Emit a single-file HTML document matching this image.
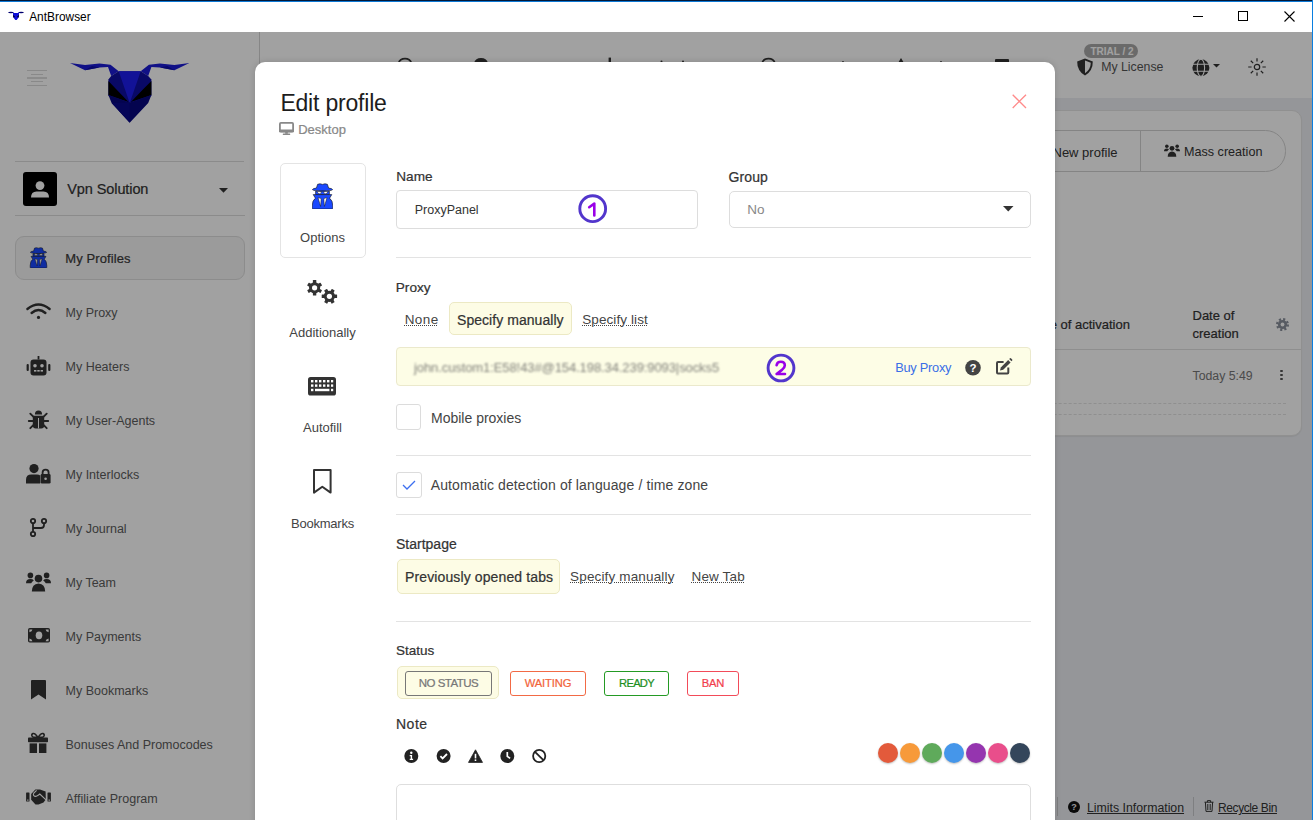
<!DOCTYPE html>
<html><head><meta charset="utf-8">
<style>
*{box-sizing:border-box;margin:0;padding:0}
html,body{width:1313px;height:820px;overflow:hidden;background:#fff;font-family:"Liberation Sans",sans-serif;color:#333}
.a{position:absolute}
.t{position:absolute;line-height:1;white-space:nowrap}
.b{font-weight:700}
.sb{font-weight:400;-webkit-text-stroke:0.22px currentColor}
svg{position:absolute;overflow:visible}
.sep{position:absolute;height:1px;background:#e3e3e3}
.si{left:65.5px;font-size:12.5px;color:#5c5c5c}
.dot{text-decoration:underline dotted;text-underline-offset:1px;text-decoration-thickness:1px}
</style></head><body>
<svg width="0" height="0" style="position:absolute">
 <defs>
  <symbol id="spy" viewBox="0 0 21 26">
   <path d="M5.6 1.3 Q8 0.2 10.5 1.4 Q13 0.2 15.4 1.3 L16.6 5 Q20.6 5.6 20.6 6.6 Q20.2 8 10.5 8 Q0.8 8 0.4 6.6 Q0.4 5.6 4.4 5 Z" fill="#1a48ff" stroke="#111" stroke-width="0.6"/>
   <path d="M3.6 8.2 H17.4 V11.6 H3.6Z" fill="#1a48ff" stroke="#111" stroke-width="0.6"/>
   <path d="M5.2 8.6 Q7.5 8.2 9.6 8.9 Q9.2 10.8 7.2 10.8 Q5.6 10.6 5.2 8.6Z M11.4 8.9 Q13.5 8.2 15.8 8.6 Q15.4 10.6 13.8 10.8 Q11.8 10.8 11.4 8.9Z" fill="#fff" stroke="#222" stroke-width="0.5"/>
   <path d="M1.2 11.6 H19.8 L17.6 15.2 Q20.8 17.4 20.8 23 V25.2 Q20.8 26 20 26 H1 Q0.2 26 0.2 25.2 V23 Q0.2 17.4 3.4 15.2Z" fill="#1a48ff" stroke="#111" stroke-width="0.6"/>
   <path d="M6 14.6 L9.2 15.6 L8.6 23.4Z M15 14.6 L11.8 15.6 L12.4 23.4Z" fill="#fff" stroke="#111" stroke-width="0.5"/>
  </symbol>
  <symbol id="users" viewBox="0 0 25 20">
   <circle cx="12.5" cy="6.6" r="3.8"/>
   <path d="M5.8 19.6 Q5.8 12 12.5 11.4 Q19.2 12 19.2 19.6Z"/>
   <circle cx="4.4" cy="3.4" r="2.8"/><circle cx="20.6" cy="3.4" r="2.8"/>
   <path d="M0 11.2 Q0 7 4.4 7 Q6.8 7 7.8 8.4 Q6 9.6 5.2 11.2Z M25 11.2 Q25 7 20.6 7 Q18.2 7 17.2 8.4 Q19 9.6 19.8 11.2Z"/>
  </symbol>
 </defs>
</svg>

<!-- ===== Title bar ===== -->
<div class="a" style="left:0;top:0;width:1313px;height:1px;background:#021838"></div><div class="a" style="left:0;top:1px;width:1313px;height:1px;background:#0b78d4"></div>
<div class="a" style="left:1312px;top:0;width:1px;height:820px;background:#0a7fe0"></div>
<svg style="left:8px;top:11px" width="16" height="10" viewBox="0 0 16 10">
 <ellipse cx="2.9" cy="1.5" rx="2.8" ry="0.75" fill="#000070"/><ellipse cx="13.1" cy="1.5" rx="2.8" ry="0.75" fill="#000070"/>
 <path d="M4.8 1.2 L6 2 H10 L11.2 1.2 L11 2.5 L10.9 6 L8.7 8.9 H7.3 L5.1 6 L5 2.5Z" fill="#1010d8"/>
 <path d="M5.1 3.8 L7 6 L5.4 6.4Z M10.9 3.8 L9 6 L10.6 6.4Z" fill="#000"/>
</svg>
<div class="t" id="title" style="left:29.2px;top:12.4px;font-size:11.9px;color:#000">AntBrowser</div>
<div class="a" style="left:1193px;top:16px;width:10px;height:1px;background:#000"></div>
<div class="a" style="left:1238px;top:11px;width:10px;height:10px;border:1px solid #000"></div>
<svg style="left:1284px;top:11px" width="11" height="11" viewBox="0 0 11 11"><path d="M0.5 0.5L10.5 10.5M10.5 0.5L0.5 10.5" stroke="#000" stroke-width="1.1"/></svg>

<!-- ===== App (under overlay) ===== -->
<div class="a" style="left:0;top:32px;width:1312px;height:788px;background:#eceef2"></div>
<!-- header -->
<div class="a" style="left:260px;top:32px;width:1052px;height:66px;background:#fff"></div>
<!-- card -->
<div class="a" style="left:600px;top:110px;width:702px;height:325.5px;background:#fff;border-radius:10px;border:1px solid #e4e4e4;box-shadow:0 1px 1px rgba(0,0,0,0.06)"></div>
<!-- sidebar -->
<div class="a" style="left:0;top:32px;width:260px;height:788px;background:#fff;border-right:1px solid #d4d4d4"></div>

<!-- hamburger -->
<div class="a" style="left:27px;top:70px;width:20px;height:1px;background:#d9d9d9"></div>
<div class="a" style="left:31px;top:74px;width:12px;height:1px;background:#d9d9d9"></div>
<div class="a" style="left:27px;top:77.4px;width:20px;height:1.2px;background:#dcdcdc"></div>
<div class="a" style="left:31px;top:81px;width:12px;height:1px;background:#d9d9d9"></div>
<div class="a" style="left:27px;top:85px;width:20px;height:1px;background:#d9d9d9"></div>

<!-- logo -->
<svg style="left:0;top:0" width="260" height="130" viewBox="0 0 260 130">
 <path d="M70 63 L85 70.3 L99.5 67.5 L108 67 L111.2 76 L118.7 71.2 L110.5 64.8 L99.5 63.5 L85 65Z" fill="#1c1cd6"/>
 <path d="M85 70.3 L92 66 L99.5 67.5Z" fill="#0d0da8"/>
 <path d="M189.4 63 L174.4 70.3 L159.9 67.5 L151.4 67 L148.2 76 L140.7 71.2 L148.9 64.8 L159.9 63.5 L174.4 65Z" fill="#1c1cd6"/>
 <path d="M174.4 70.3 L167.4 66 L159.9 67.5Z" fill="#0d0da8"/>
 <path d="M108.4 79.5 L111.2 76 L118.7 71.2 L140.7 71.2 L148.2 76 L151.4 79.5 L151.4 96 L129.7 103 L108.4 96Z" fill="#0f0fa2"/>
 <path d="M118.7 71.2 L140.7 71.2 L129.7 103Z" fill="#1e1ef0"/>
 <path d="M108.4 81 L116 89 L128.5 102 L108.4 95Z M151.4 81 L143.4 89 L130.9 102 L151.4 95Z" fill="#000"/>
 <path d="M108.4 95 L129.7 102.6 L151.4 95 L148.2 103 L129.7 122.7 L111.6 103Z" fill="#07077e"/>
 <path d="M111.6 103 L129.7 102.6 L129.7 122.7Z" fill="#08088c"/>
</svg>

<div class="sep" style="left:15px;top:161px;width:229px;background:#dcdcdc"></div>
<div class="a" style="left:23px;top:172px;width:34px;height:34px;background:#000;border-radius:3px"></div>
<svg style="left:23px;top:172px" width="34" height="34" viewBox="0 0 34 34"><circle cx="17" cy="13.6" r="4.4" fill="#fff"/><path d="M8 25.5 Q8 19.5 13.5 19.5 H20.5 Q26 19.5 26 25.5Z" fill="#fff"/></svg>
<div class="t sb" style="left:67.3px;top:182px;font-size:14.5px;letter-spacing:-0.1px;color:#333">Vpn Solution</div>
<svg style="left:219px;top:187.5px" width="9" height="5" viewBox="0 0 9 5"><path d="M0 0H9L4.5 4.8Z" fill="#333"/></svg>
<div class="sep" style="left:15px;top:215px;width:230px;background:#dcdcdc"></div>

<!-- My Profiles active -->
<div class="a" style="left:15px;top:236px;width:230px;height:44px;background:#f5f5f5;border:1px solid #dedede;border-radius:9px"></div>
<svg style="left:29.3px;top:247px" width="19" height="21"><use href="#spy" width="19" height="21"/></svg>
<div class="t sb" style="left:65.3px;top:251.6px;font-size:13px;letter-spacing:0.1px;color:#3a3a3a">My Profiles</div>

<div class="t si" style="top:307.3px">My Proxy</div>
<div class="t si" style="top:361.3px">My Heaters</div>
<div class="t si" style="top:415.3px">My User-Agents</div>
<div class="t si" style="top:469.3px">My Interlocks</div>
<div class="t si" style="top:523.3px">My Journal</div>
<div class="t si" style="top:577.2px">My Team</div>
<div class="t si" style="top:631.3px">My Payments</div>
<div class="t si" style="top:685.3px">My Bookmarks</div>
<div class="t si" style="top:739.3px">Bonuses And Promocodes</div>
<div class="t si" style="top:793.3px">Affiliate Program</div>

<!-- sidebar icons -->
<svg style="left:26px;top:302.8px" width="25" height="17" viewBox="0 0 25 17" fill="none" stroke="#333" stroke-width="2.4" stroke-linecap="round">
 <path d="M1.4 6 Q12.5 -3 23.6 6"/><path d="M5.6 10 Q12.5 4 19.4 10"/><circle cx="12.5" cy="14.4" r="1.6" fill="#333" stroke="none"/>
</svg>
<svg style="left:26px;top:355.5px" width="25" height="20" viewBox="0 0 25 20">
 <rect x="11.6" y="0" width="1.8" height="3.5" fill="#333"/>
 <rect x="4.5" y="3.4" width="16" height="16" rx="3" fill="#333"/>
 <rect x="0.6" y="8" width="2.2" height="7" rx="1" fill="#333"/><rect x="22.2" y="8" width="2.2" height="7" rx="1" fill="#333"/>
 <circle cx="9" cy="9.8" r="1.8" fill="#fff"/><circle cx="16" cy="9.8" r="1.8" fill="#fff"/>
 <rect x="8" y="14" width="2.4" height="1.6" fill="#fff"/><rect x="11.3" y="14" width="2.4" height="1.6" fill="#fff"/><rect x="14.6" y="14" width="2.4" height="1.6" fill="#fff"/>
</svg>
<svg style="left:28.7px;top:409.8px" width="20" height="20" viewBox="0 0 20 20">
 <path d="M5.9 4.6 Q5.9 0.4 9.5 0.4 Q13.1 0.4 13.1 4.6Z" fill="#333"/>
 <path d="M3.8 5.8 H15.2 V15.4 Q15.2 18.4 12.2 18.4 H6.8 Q3.8 18.4 3.8 15.4Z" fill="#333"/>
 <path d="M9.5 8 V18.4" stroke="#fff" stroke-width="1"/>
 <path d="M1.3 3.7 L4.8 7.2 M-0.2 11 H3.8 M1.3 18.2 L4.8 14.7 M17.7 3.7 L14.2 7.2 M19.2 11 H15.2 M17.7 18.2 L14.2 14.7" stroke="#333" stroke-width="1.9" stroke-linecap="round"/>
</svg>
<svg style="left:26.3px;top:463.8px" width="25" height="20" viewBox="0 0 25 20" fill="#333">
 <circle cx="8" cy="4.6" r="4.6"/>
 <path d="M0 19.6 V16 Q0 10.6 5.4 10.6 H11 Q13 10.6 14.2 11.6 V19.6Z"/>
 <path d="M16.6 10.6 V8.4 Q16.6 5.6 19.6 5.6 Q22.6 5.6 22.6 8.4 V10.6" fill="none" stroke="#333" stroke-width="1.8"/>
 <rect x="14.6" y="10" width="10" height="9.6" rx="1.4"/>
 <circle cx="19.6" cy="14.8" r="1.3" fill="#fff"/>
</svg>
<svg style="left:30px;top:518px" width="17" height="19" viewBox="0 0 17 19" fill="none" stroke="#333" stroke-width="1.8">
 <circle cx="3" cy="3" r="2.2"/><circle cx="3" cy="16" r="2.2"/><circle cx="14" cy="3" r="2.2"/>
 <path d="M3 5.2 V13.8 M14 5.2 V7 Q14 10 11 10 H3"/>
</svg>
<svg style="left:26px;top:571.7px" width="25" height="20" fill="#333"><use href="#users" width="25" height="20"/></svg>
<svg style="left:27.6px;top:628px" width="22" height="15" viewBox="0 0 22 15">
 <rect x="0" y="0" width="22" height="14.6" rx="1.8" fill="#333"/>
 <path d="M1.4 1.4 H4.4 Q4.2 3.6 1.4 4.2Z M20.6 1.4 H17.6 Q17.8 3.6 20.6 4.2Z M1.4 13.2 H4.4 Q4.2 11 1.4 10.4Z M20.6 13.2 H17.6 Q17.8 11 20.6 10.4Z" fill="#fff"/>
 <ellipse cx="11" cy="7.3" rx="3.3" ry="3.9" fill="#fff"/>
</svg>
<svg style="left:31.1px;top:679.6px" width="15" height="20" viewBox="0 0 15 20"><path d="M0 1 Q0 0 1 0 H14 Q15 0 15 1 V19.5 L7.5 14.6 L0 19.5Z" fill="#333"/></svg>
<svg style="left:28.4px;top:733.3px" width="20" height="20" viewBox="0 0 20 20" fill="#333">
 <path d="M10 4.4 Q7 0 5 0.6 Q3.4 1.2 4 3 Q4.6 4.4 7 4.4Z M10 4.4 Q13 0 15 0.6 Q16.6 1.2 16 3 Q15.4 4.4 13 4.4Z" fill="none" stroke="#333" stroke-width="1.6"/>
 <rect x="0" y="4.6" width="20" height="4.6" rx="0.8"/>
 <rect x="1.6" y="10.4" width="7.4" height="9.6"/><rect x="11" y="10.4" width="7.4" height="9.6"/>
</svg>
<svg style="left:26px;top:789.4px" width="25" height="16" viewBox="0 0 25 16" fill="#333">
 <rect x="0.1" y="3.5" width="3.4" height="9" rx="0.5"/><rect x="21.5" y="3.5" width="3.4" height="9" rx="0.5"/>
 <rect x="1" y="10.6" width="1.6" height="1" fill="#fff"/><rect x="22.4" y="10.6" width="1.6" height="1" fill="#fff"/>
 <path d="M5.2 5 L9.3 0.6 H14 L19.6 2.4 L19.8 10.5 L17.5 13.5 L12.5 15.6 H9.5 L5.2 10.8Z"/>
 <path d="M10.6 1.4 L7.8 4.2 Q6.6 6.2 8.6 7.2 Q10.4 7.8 12.2 6.2 L13.8 5 L20 10.8" fill="none" stroke="#fff" stroke-width="1.1"/>
</svg>

<!-- header icons peeking above modal -->
<svg style="left:0;top:0" width="1060" height="64" viewBox="0 0 1060 64" fill="none" stroke="#333" stroke-width="1.6">
 <path d="M398.5 63 Q400 58.6 405 58.6 Q410 58.6 411.5 63"/>
 <path d="M474 63 Q475.5 58 481 58 Q486.5 58 488 63Z" fill="#333" stroke="none"/>
 <rect x="608.6" y="57.6" width="2.4" height="5" fill="#333" stroke="none"/>
 <circle cx="661.5" cy="61.6" r="1" fill="#333" stroke="none"/><circle cx="683" cy="61.6" r="1" fill="#333" stroke="none"/>
 <path d="M762 63 Q763.5 58.6 768.5 58.6 Q773.5 58.6 775 63"/>
 <circle cx="843" cy="61.8" r="0.9" fill="#333" stroke="none"/><circle cx="941" cy="61.8" r="0.9" fill="#333" stroke="none"/>
 <path d="M898 63 L901 58 L904 63Z" fill="#333" stroke="none"/>
 <rect x="995" y="59" width="14" height="4" rx="1" fill="#333" stroke="none"/>
</svg>
<!-- header right -->
<div class="a" style="left:1084px;top:44px;width:54px;height:14px;border-radius:7px;background:#a9a9a9"></div>
<div class="t b" style="left:1090.5px;top:47px;font-size:10px;letter-spacing:0px;color:#fff">TRIAL / 2</div>
<svg style="left:1075.6px;top:58px" width="18" height="18" viewBox="0 0 18 18">
 <path d="M9 0.4 L16.8 3.4 Q17 12.6 9 17.6 Q1 12.6 1.2 3.4Z" fill="#333"/>
 <path d="M9 2.6 L14.8 4.8 Q14.6 11.6 9 15.2Z" fill="#fff"/>
</svg>
<div class="t" style="left:1101.2px;top:61.4px;font-size:12.3px;color:#555">My License</div>
<svg style="left:1191.5px;top:58.5px" width="18" height="18" viewBox="0 0 18 18">
 <circle cx="8.9" cy="8.7" r="8.5" fill="#333"/>
 <path d="M0 5.2 H18 M0 12.2 H18" stroke="#fff" stroke-width="1.1"/>
 <ellipse cx="8.9" cy="8.7" rx="3.7" ry="8.6" fill="none" stroke="#fff" stroke-width="1.1"/>
</svg>
<svg style="left:1213px;top:63.6px" width="7" height="4" viewBox="0 0 7 4"><path d="M0 0H7L3.5 3.6Z" fill="#333"/></svg>
<svg style="left:1247.6px;top:58.2px" width="18" height="18" viewBox="0 0 18 18" fill="none" stroke="#333" stroke-width="1.2">
 <circle cx="9" cy="9" r="2.7"/>
 <path d="M14.40 9.00 L17.80 9.00 M12.82 12.82 L15.22 15.22 M9.00 14.40 L9.00 17.80 M5.18 12.82 L2.78 15.22 M3.60 9.00 L0.20 9.00 M5.18 5.18 L2.78 2.78 M9.00 3.60 L9.00 0.20 M12.82 5.18 L15.22 2.78"/>
</svg>

<!-- card content -->
<div class="a" style="left:900px;top:130px;width:386px;height:41.5px;border:1px solid #d2d2d2;border-radius:0 20.5px 20.5px 0"></div>
<div class="a" style="left:1140px;top:130px;width:1px;height:41px;background:#d2d2d2"></div>
<div class="t" style="left:1052.5px;top:146px;font-size:13px;color:#333">New profile</div>
<svg style="left:1164px;top:144px" width="16" height="13" fill="#333"><use href="#users" width="16" height="13"/></svg>
<div class="t" style="left:1184px;top:146px;font-size:12.6px;color:#333">Mass creation</div>

<div class="t sb" style="left:1029.5px;top:318px;font-size:13px;color:#333">Date of activation</div>
<div class="t sb" style="left:1192.5px;top:309px;font-size:13px;color:#333">Date of</div>
<div class="t sb" style="left:1192.5px;top:326.7px;font-size:13px;color:#333">creation</div>
<svg style="left:1275.5px;top:317.6px" width="13" height="13" viewBox="0 0 13 13">
 <circle cx="6.5" cy="6.5" r="4.6" fill="#8a909c"/>
 <circle cx="6.5" cy="6.5" r="5.3" fill="none" stroke="#8a909c" stroke-width="2.4" stroke-dasharray="2.1 2.06"/>
 <circle cx="6.5" cy="6.5" r="1.9" fill="#fff"/>
</svg>
<div class="a" style="left:600px;top:349px;width:701px;height:1px;background:#e1e1e1"></div>
<div class="t" style="left:1192.5px;top:370.4px;font-size:12.3px;color:#777">Today 5:49</div>
<div class="a" style="left:1280.2px;top:369.6px;width:2.4px;height:2.4px;border-radius:50%;background:#555"></div>
<div class="a" style="left:1280.2px;top:373.8px;width:2.4px;height:2.4px;border-radius:50%;background:#555"></div>
<div class="a" style="left:1280.2px;top:378px;width:2.4px;height:2.4px;border-radius:50%;background:#555"></div>
<div class="a" style="left:600px;top:403px;width:686px;height:0;border-top:1px dashed #e2e2e2"></div>
<div class="a" style="left:600px;top:414px;width:686px;height:0;border-top:1px dashed #e2e2e2"></div>

<!-- footer -->
<div class="a" style="left:1057px;top:797px;width:1px;height:19px;background:#c8c9cc"></div>
<div class="a" style="left:1193px;top:797px;width:1px;height:19px;background:#c8c9cc"></div>
<svg style="left:1068.4px;top:800.6px" width="12" height="12" viewBox="0 0 12 12"><circle cx="6" cy="6" r="6" fill="#111"/><text x="6" y="9.4" font-size="9" font-weight="700" text-anchor="middle" fill="#eceef2" font-family="Liberation Sans">?</text></svg>
<div class="t" style="left:1087px;top:801.5px;font-size:12.3px;color:#333;text-decoration:underline">Limits Information</div>
<svg style="left:1204.3px;top:800px" width="10" height="12" viewBox="0 0 10 12" fill="none" stroke="#333" stroke-width="1">
 <path d="M0.5 2.2 H9.5 M3.4 2.2 V0.6 H6.6 V2.2 M1.4 2.2 L2 11.4 H8 L8.6 2.2 M3.8 4 V10 M6.2 4 V10"/>
</svg>
<div class="t" style="left:1218px;top:802px;font-size:12px;letter-spacing:-0.4px;color:#333;text-decoration:underline">Recycle Bin</div>

<!-- overlay -->
<div class="a" style="left:0;top:32px;width:1312px;height:788px;background:rgba(0,0,0,0.369)"></div>

<!-- ===== Modal ===== -->
<div id="modal" class="a" style="left:255px;top:62px;width:800px;height:800px;background:#fff;border-radius:10px;box-shadow:0 0 6px rgba(0,0,0,0.15)"></div>

<!-- close -->
<svg style="left:1012px;top:93.9px" width="15" height="15" viewBox="0 0 15 15"><path d="M0.7 0.7L14 14M14 0.7L0.7 14" stroke="#ff8a8a" stroke-width="1.3"/></svg>
<div class="t" id="h_edit" style="left:280.4px;top:92.4px;font-size:23px;letter-spacing:-0.2px;color:#1d1d1d">Edit profile</div>
<svg style="left:279px;top:122px" width="15" height="13" viewBox="0 0 15 13">
 <rect x="0.9" y="0.9" width="13.2" height="8.6" rx="1" fill="none" stroke="#888" stroke-width="1.8"/>
 <rect x="0" y="7.6" width="15" height="2.6" rx="0.6" fill="#888"/>
 <rect x="6.2" y="10" width="2.6" height="1.8" fill="#888"/><rect x="3.8" y="11.4" width="7.4" height="1.6" rx="0.5" fill="#888"/>
</svg>
<div class="t sb" id="h_desk" style="left:298.2px;top:122.6px;font-size:13px;color:#888">Desktop</div>

<!-- left tabs -->
<div class="a" style="left:279.5px;top:163.3px;width:86px;height:95px;border:1px solid #e4e4e4;border-radius:5px"></div>
<svg style="left:312px;top:182.7px" width="21" height="26"><use href="#spy" width="21" height="26"/></svg>
<div class="t" style="left:280px;width:85px;text-align:center;top:231.2px;font-size:13px;color:#444">Options</div>
<svg style="left:300px;top:272px" width="45" height="38" viewBox="0 0 45 38"><g transform="translate(14.6,15.8)" fill="#333"><rect x="-1.7" y="-7.7" width="3.4" height="4" rx="0.5" transform="rotate(0)"/><rect x="-1.7" y="-7.7" width="3.4" height="4" rx="0.5" transform="rotate(60)"/><rect x="-1.7" y="-7.7" width="3.4" height="4" rx="0.5" transform="rotate(120)"/><rect x="-1.7" y="-7.7" width="3.4" height="4" rx="0.5" transform="rotate(180)"/><rect x="-1.7" y="-7.7" width="3.4" height="4" rx="0.5" transform="rotate(240)"/><rect x="-1.7" y="-7.7" width="3.4" height="4" rx="0.5" transform="rotate(300)"/><circle r="5.6"/><circle r="2.6" fill="#fff"/></g><g transform="translate(29.4,24.3)" fill="#333"><rect x="-1.7" y="-7.7" width="3.4" height="4" rx="0.5" transform="rotate(30)"/><rect x="-1.7" y="-7.7" width="3.4" height="4" rx="0.5" transform="rotate(90)"/><rect x="-1.7" y="-7.7" width="3.4" height="4" rx="0.5" transform="rotate(150)"/><rect x="-1.7" y="-7.7" width="3.4" height="4" rx="0.5" transform="rotate(210)"/><rect x="-1.7" y="-7.7" width="3.4" height="4" rx="0.5" transform="rotate(270)"/><rect x="-1.7" y="-7.7" width="3.4" height="4" rx="0.5" transform="rotate(330)"/><circle r="5.6"/><circle r="2.6" fill="#fff"/></g></svg>
<div class="t" style="left:280px;width:85px;text-align:center;top:326.3px;font-size:13px;color:#444">Additionally</div>
<svg style="left:308px;top:377px" width="28" height="19" viewBox="0 0 28 19">
 <rect x="0" y="0" width="28" height="18.6" rx="2.6" fill="#333"/>
 <g fill="#fff">
  <rect x="3" y="3" width="2.4" height="2.4"/><rect x="7" y="3" width="2.4" height="2.4"/><rect x="11" y="3" width="2.4" height="2.4"/><rect x="15" y="3" width="2.4" height="2.4"/><rect x="19" y="3" width="2.4" height="2.4"/><rect x="23" y="3" width="2.2" height="2.4"/>
  <rect x="3" y="7.4" width="2.4" height="2.4"/><rect x="7" y="7.4" width="2.4" height="2.4"/><rect x="11" y="7.4" width="2.4" height="2.4"/><rect x="15" y="7.4" width="2.4" height="2.4"/><rect x="19" y="7.4" width="2.4" height="2.4"/><rect x="23" y="7.4" width="2.2" height="2.4"/>
  <rect x="3" y="11.8" width="2.4" height="2.4"/><rect x="7" y="11.8" width="14.4" height="2.4"/><rect x="23" y="11.8" width="2.2" height="2.4"/>
 </g>
</svg>
<div class="t" style="left:280px;width:85px;text-align:center;top:420.9px;font-size:13px;color:#444">Autofill</div>
<svg style="left:313px;top:469.4px" width="19" height="25" viewBox="0 0 19 25"><path d="M1 1 H17.6 V23.6 L9.3 17.8 L1 23.6Z" fill="none" stroke="#333" stroke-width="2" stroke-linejoin="round"/></svg>
<div class="t" style="left:280px;width:85px;text-align:center;top:516.9px;font-size:13px;letter-spacing:-0.25px;color:#444">Bookmarks</div>

<!-- Name / Group -->
<div class="t sb" style="left:396.3px;top:169.5px;font-size:13.6px;color:#333">Name</div>
<div class="a" style="left:396px;top:190px;width:301.5px;height:38.5px;border:1px solid #dddddd;border-radius:4px"></div>
<div class="t" style="left:414.7px;top:204.3px;font-size:12.5px;color:#333">ProxyPanel</div>
<svg style="left:577.6px;top:193.5px" width="30" height="30" viewBox="0 0 30 30"><circle cx="14.7" cy="14.7" r="12.9" fill="none" stroke="#5236cc" stroke-width="2.9"/><path d="M11.2 13.2 L16.3 9.6 V21.4" fill="none" stroke="#9a00e8" stroke-width="2.6" stroke-linecap="round" stroke-linejoin="round"/></svg>
<div class="t sb" style="left:728.5px;top:169.5px;font-size:14px;letter-spacing:0.1px;color:#333">Group</div>
<div class="a" style="left:728.5px;top:190.5px;width:302px;height:37px;border:1px solid #dddddd;border-radius:5px"></div>
<div class="t" style="left:747.3px;top:203.4px;font-size:13.5px;color:#888">No</div>
<svg style="left:1002.7px;top:205.8px" width="11" height="6" viewBox="0 0 11 6"><path d="M0 0H10.5L5.25 5.4Z" fill="#333"/></svg>
<div class="sep" style="left:396px;top:257px;width:634.5px"></div>

<!-- Proxy -->
<div class="t sb" style="left:395.8px;top:280.7px;font-size:13.6px;color:#333">Proxy</div>
<div class="t dot" style="left:404.7px;top:313px;font-size:13.5px;letter-spacing:0.4px;color:#444">None</div>
<div class="a" style="left:449.3px;top:302.4px;width:122.4px;height:33px;background:#fdfce5;border:1px solid #ece9c4;border-radius:5px"></div>
<div class="t sb" style="left:457px;top:312.5px;font-size:14px;letter-spacing:0.05px;color:#333">Specify manually</div>
<div class="t dot" style="left:582.2px;top:313px;font-size:13.5px;letter-spacing:0.1px;color:#444">Specify list</div>
<div class="a" style="left:396px;top:347.3px;width:634.6px;height:38.3px;background:#fdfde6;border:1px solid #ebe9cc;border-radius:4px"></div>
<div class="t" style="left:414px;top:361.4px;font-size:13px;letter-spacing:-0.09px;color:#80807a;filter:blur(1.25px)">john.custom1:E58!43#@154.198.34.239:9093|socks5</div>
<svg style="left:766px;top:353.2px" width="30" height="30" viewBox="0 0 30 30"><circle cx="15" cy="15" r="12.9" fill="none" stroke="#5236cc" stroke-width="2.9"/><path d="M10.6 12.2 Q11.2 8.8 14.8 8.8 Q18.8 8.8 18.8 12.4 Q18.8 14.4 16 16.9 L10.6 21 H19" fill="none" stroke="#9a00e8" stroke-width="2.6" stroke-linecap="round" stroke-linejoin="round"/></svg>
<div class="t" style="left:895.2px;top:361.5px;font-size:12.8px;letter-spacing:-0.25px;color:#3a6fe6">Buy Proxy</div>
<svg style="left:965px;top:360px" width="16" height="16" viewBox="0 0 16 16"><circle cx="8" cy="7.8" r="7.8" fill="#444"/><text x="8" y="12.2" font-size="11.5" font-weight="700" text-anchor="middle" fill="#fff" font-family="Liberation Sans">?</text></svg>
<svg style="left:994.7px;top:358.3px" width="18" height="18" viewBox="0 0 18 18">
 <path d="M8.6 4 H3 Q2 4 2 5 V14.4 Q2 15.4 3 15.4 H12.3 Q13.3 15.4 13.3 14.4 V9.6" fill="none" stroke="#444" stroke-width="2"/>
 <path d="M5 12.6 L5.8 9.4 L13.2 2 L15.6 4.4 L8.2 11.8Z" fill="#444"/>
 <path d="M14.2 1 L15 0.2 Q15.6 -0.2 16.2 0.4 L17.2 1.4 Q17.6 2 17.2 2.4 L16.4 3.2Z" fill="#444"/>
</svg>
<div class="a" style="left:396.3px;top:404.4px;width:25.2px;height:25.2px;border:1px solid #dcdcdc;border-radius:3px"></div>
<div class="t" style="left:431px;top:410.7px;font-size:14px;color:#444">Mobile proxies</div>
<div class="sep" style="left:396px;top:455px;width:634.5px"></div>
<div class="a" style="left:396.4px;top:472.3px;width:25.2px;height:25.4px;border:1px solid #dcdcdc;border-radius:3px"></div>
<svg style="left:402px;top:480px" width="14" height="10" viewBox="0 0 14 10"><path d="M1 5 L5 9 L13 1" fill="none" stroke="#3c6ff0" stroke-width="1.3"/></svg>
<div class="t" style="left:430.7px;top:478.3px;font-size:14px;letter-spacing:0.12px;color:#444">Automatic detection of language / time zone</div>
<div class="sep" style="left:396px;top:514px;width:634.5px"></div>

<!-- Startpage -->
<div class="t sb" style="left:396px;top:537.2px;font-size:14px;color:#333">Startpage</div>
<div class="a" style="left:397.3px;top:559.4px;width:162.5px;height:34.3px;background:#fdfce5;border:1px solid #ece9c4;border-radius:5px"></div>
<div class="t sb" style="left:405px;top:569.6px;font-size:14px;letter-spacing:0.12px;color:#333">Previously opened tabs</div>
<div class="t dot" style="left:570.1px;top:570.4px;font-size:13.5px;letter-spacing:0.15px;color:#444">Specify manually</div>
<div class="t dot" style="left:691.5px;top:570.4px;font-size:13.5px;letter-spacing:0.15px;color:#444">New Tab</div>
<div class="sep" style="left:396px;top:621px;width:634.5px"></div>

<!-- Status -->
<div class="t sb" style="left:396px;top:644.4px;font-size:13.5px;color:#333">Status</div>
<div class="a" style="left:397.3px;top:665.7px;width:102px;height:33.4px;background:#fdfce5;border:1px solid #ece9c4;border-radius:5px"></div>
<div class="a" style="left:405px;top:670.8px;width:87.1px;height:25px;border:1px solid #777;border-radius:3px"></div>
<div class="t sb" style="left:405px;width:87px;text-align:center;top:677.5px;font-size:11.5px;letter-spacing:-0.5px;color:#777">NO STATUS</div>
<div class="a" style="left:510.1px;top:670.8px;width:75.7px;height:25px;border:1px solid #f26a45;border-radius:3px"></div>
<div class="t sb" style="left:510px;width:76px;text-align:center;top:677.5px;font-size:11.2px;letter-spacing:-0.1px;color:#f2643a">WAITING</div>
<div class="a" style="left:604px;top:670.8px;width:64.6px;height:25px;border:1px solid #249a24;border-radius:3px"></div>
<div class="t sb" style="left:604px;width:65px;text-align:center;top:677.5px;font-size:11.2px;letter-spacing:-0.75px;color:#1e8f1e">READY</div>
<div class="a" style="left:687.2px;top:670.8px;width:51.4px;height:25px;border:1px solid #f24b59;border-radius:3px"></div>
<div class="t sb" style="left:687px;width:52px;text-align:center;top:677.5px;font-size:11.2px;letter-spacing:-0.25px;color:#f23d4c">BAN</div>

<!-- Note -->
<div class="t sb" style="left:396px;top:717.2px;font-size:14px;letter-spacing:0.5px;color:#333">Note</div>
<svg style="left:404px;top:748.7px" width="145" height="14" viewBox="0 0 145 14">
 <g transform="translate(0.3,0)"><circle cx="7" cy="7" r="7" fill="#222"/><circle cx="7" cy="3.8" r="1.2" fill="#fff"/><path d="M5.4 6 H7.8 V9.8 H8.8 V11 H5.4 V9.8 H6.4 V7.2 H5.4Z" fill="#fff"/></g>
 <g transform="translate(32.6,0)"><circle cx="7" cy="7" r="7" fill="#222"/><path d="M3.8 7.2 L6 9.4 L10.4 5" fill="none" stroke="#fff" stroke-width="1.8"/></g>
 <g transform="translate(64.5,0)"><path d="M7 0.8 L14 13.4 H0Z" fill="#222" stroke="#222" stroke-width="0.8" stroke-linejoin="round"/><rect x="6.2" y="4.8" width="1.6" height="4.6" fill="#fff"/><rect x="6.2" y="10.4" width="1.6" height="1.6" fill="#fff"/></g>
 <g transform="translate(96.3,0)"><circle cx="7" cy="7" r="7" fill="#222"/><path d="M7 3 V7.4 L9.8 9.4" fill="none" stroke="#fff" stroke-width="1.7"/></g>
 <g transform="translate(128.2,0)"><circle cx="7" cy="7" r="6.1" fill="none" stroke="#222" stroke-width="1.8"/><path d="M2.8 2.8 L11.2 11.2" stroke="#222" stroke-width="1.8"/></g>
</svg>
<div class="a" style="left:878px;top:743px;width:20px;height:20px;border-radius:50%;background:#e35a3b;box-shadow:0 1px 2px rgba(0,0,0,.25)"></div>
<div class="a" style="left:900px;top:743px;width:20px;height:20px;border-radius:50%;background:#f79a3a;box-shadow:0 1px 2px rgba(0,0,0,.25)"></div>
<div class="a" style="left:922px;top:743px;width:20px;height:20px;border-radius:50%;background:#5faa5b;box-shadow:0 1px 2px rgba(0,0,0,.25)"></div>
<div class="a" style="left:944px;top:743px;width:20px;height:20px;border-radius:50%;background:#4596ea;box-shadow:0 1px 2px rgba(0,0,0,.25)"></div>
<div class="a" style="left:966px;top:743px;width:20px;height:20px;border-radius:50%;background:#9535af;box-shadow:0 1px 2px rgba(0,0,0,.25)"></div>
<div class="a" style="left:988px;top:743px;width:20px;height:20px;border-radius:50%;background:#e94e8b;box-shadow:0 1px 2px rgba(0,0,0,.25)"></div>
<div class="a" style="left:1010px;top:743px;width:20px;height:20px;border-radius:50%;background:#34465b;box-shadow:0 1px 2px rgba(0,0,0,.25)"></div>
<div class="a" style="left:396px;top:784.4px;width:635px;height:100px;border:1px solid #dedede;border-radius:5px"></div>


</body></html>
